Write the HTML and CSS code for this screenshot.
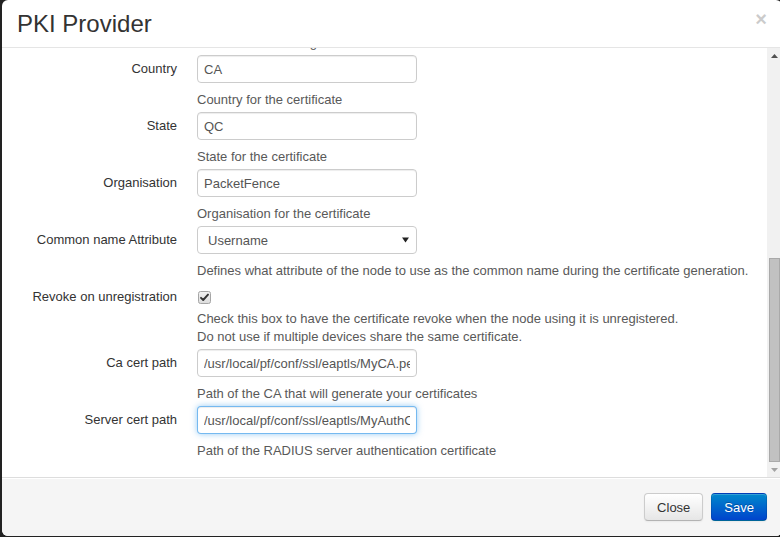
FILE: index.html
```html
<!DOCTYPE html>
<html>
<head>
<meta charset="utf-8">
<link rel="stylesheet" href="styles.css">
</head>
<body>
<div class="modal">
  <div class="modal-header">
    <h3 class="modal-title">PKI Provider</h3>
    <span class="close">×</span>
  </div>
  <div class="modal-body">
    <div class="scroll-area">
      <form class="form">
        <div class="group">
          <div class="label"></div>
          <div class="controls">
            <div class="help flush">Profile used for the generation of certificate</div>
          </div>
        </div>
        <div class="group">
          <label class="label">Country</label>
          <div class="controls">
            <input class="input" type="text" value="CA">
            <div class="help">Country for the certificate</div>
          </div>
        </div>
        <div class="group">
          <label class="label">State</label>
          <div class="controls">
            <input class="input" type="text" value="QC">
            <div class="help">State for the certificate</div>
          </div>
        </div>
        <div class="group">
          <label class="label">Organisation</label>
          <div class="controls">
            <input class="input" type="text" value="PacketFence">
            <div class="help">Organisation for the certificate</div>
          </div>
        </div>
        <div class="group">
          <label class="label">Common name Attribute</label>
          <div class="controls">
            <div class="select">
              <span>Username</span>
              <svg class="caret" width="7" height="6" viewBox="0 0 7 6"><path d="M0 0.5H7L3.5 5.5Z" fill="#222"/></svg>
            </div>
            <div class="help">Defines what attribute of the node to use as the common name during the certificate generation.</div>
          </div>
        </div>
        <div class="group">
          <label class="label">Revoke on unregistration</label>
          <div class="controls">
            <div class="check-row">
              <svg class="checkbox" width="13" height="13" viewBox="0 0 13 13">
                <defs>
                  <linearGradient id="cbg" x1="0" y1="0" x2="0" y2="1">
                    <stop offset="0" stop-color="#f2f2f2"/>
                    <stop offset="1" stop-color="#dcdcdc"/>
                  </linearGradient>
                </defs>
                <rect x="0.5" y="0.5" width="12" height="12" rx="2" fill="url(#cbg)" stroke="#a6a6a6"/>
                <path d="M3 6.8L5.2 9L10 3.6" fill="none" stroke="#333" stroke-width="1.9" stroke-linecap="round" stroke-linejoin="round"/>
              </svg>
            </div>
            <div class="help tight">Check this box to have the certificate revoke when the node using it is unregistered.<br>Do not use if multiple devices share the same certificate.</div>
          </div>
        </div>
        <div class="group">
          <label class="label">Ca cert path</label>
          <div class="controls">
            <input class="input" type="text" value="/usr/local/pf/conf/ssl/eaptls/MyCA.pem">
            <div class="help">Path of the CA that will generate your certificates</div>
          </div>
        </div>
        <div class="group">
          <label class="label">Server cert path</label>
          <div class="controls">
            <input class="input focus" type="text" value="/usr/local/pf/conf/ssl/eaptls/MyAuthCert.pem">
            <div class="help">Path of the RADIUS server authentication certificate</div>
          </div>
        </div>
      </form>
    </div>
    <div class="scrollbar">
      <div class="sb-btn">
        <svg width="7" height="4" viewBox="0 0 7 4"><path d="M0 4H7L3.5 0Z" fill="#505050"/></svg>
      </div>
      <div class="sb-track"><div class="sb-thumb"></div></div>
      <div class="sb-btn">
        <svg width="7" height="4" viewBox="0 0 7 4"><path d="M0 0H7L3.5 4Z" fill="#a3a3a3"/></svg>
      </div>
    </div>
  </div>
  <div class="modal-footer">
    <button class="btn" type="button">Close</button>
    <button class="btn btn-primary" type="button">Save</button>
  </div>
</div>
</body>
</html>
```

FILE: styles.css
```css
html, body {
  margin: 0;
  padding: 0;
  height: 537px;
  overflow: hidden;
  background: #222;
}
body {
  display: flex;
  padding-left: 2px;
  font-family: "Liberation Sans", Arial, sans-serif;
  font-size: 13px;
  color: #333;
}
.modal {
  flex: 0 0 780px;
  width: 780px;
  height: 536px;
  background: #fff;
  border-radius: 6px;
  display: flex;
  flex-direction: column;
  overflow: hidden;
}
.modal-header {
  display: flex;
  justify-content: space-between;
  align-items: flex-start;
  padding: 9px 15px 8px 15px;
  border-bottom: 1px solid #e5e5e5;
}
.modal-title {
  margin: 0;
  font-size: 24px;
  line-height: 30px;
  font-weight: normal;
  color: #333;
}
.close {
  font-size: 20px;
  font-weight: bold;
  line-height: 20px;
  color: #000;
  opacity: 0.2;
}
.modal-body {
  flex: 1;
  min-height: 0;
  display: flex;
}
.scroll-area {
  flex: 1;
  min-width: 0;
  overflow: hidden;
  display: flex;
  flex-direction: column;
  justify-content: flex-end;
}
.form {
  margin: 0;
  padding: 0 15px 14px 15px;
}
.group {
  display: flex;
  margin-bottom: 3px;
}
.label {
  flex: 0 0 160px;
  width: 160px;
  margin-right: 20px;
  text-align: right;
  line-height: 28px;
  color: #333;
}
.controls {
  flex: 1;
  min-width: 0;
}
.input {
  display: block;
  box-sizing: border-box;
  width: 220px;
  height: 28px;
  margin: 0;
  padding: 0 6px;
  border: 1px solid #ccc;
  border-radius: 4px;
  box-shadow: inset 0 1px 1px rgba(0, 0, 0, 0.075);
  font-family: "Liberation Sans", Arial, sans-serif;
  font-size: 13px;
  color: #555;
  background: #fff;
  outline: none;
}
.input.focus {
  border-color: rgba(82, 168, 236, 0.8);
  box-shadow: inset 0 1px 1px rgba(0, 0, 0, 0.075), 0 0 6px rgba(82, 168, 236, 0.6);
}
.select {
  box-sizing: border-box;
  width: 220px;
  height: 28px;
  display: flex;
  align-items: center;
  justify-content: space-between;
  padding: 0 7px 0 10px;
  border: 1px solid #ccc;
  border-radius: 4px;
  background: #fff;
  color: #555;
}
.caret {
  display: block;
}
.help {
  margin-top: 8px;
  line-height: 18px;
  color: #595959;
  white-space: nowrap;
}
.help.tight,
.help.flush {
  margin-top: 0;
}
.check-row {
  height: 27px;
  display: flex;
  align-items: center;
  padding-left: 1px;
}
.checkbox {
  display: block;
  margin-top: 1px;
}
.scrollbar {
  flex: 0 0 15px;
  width: 15px;
  background: #f1f1f1;
  display: flex;
  flex-direction: column;
}
.sb-btn {
  height: 15px;
  display: flex;
  align-items: center;
  justify-content: center;
}
.sb-track {
  flex: 1;
  display: flex;
  flex-direction: column;
  justify-content: flex-end;
}
.sb-thumb {
  height: 204px;
  margin: 0 2px;
  background: #c1c1c1;
  border: 1px solid #a9a9a9;
  box-sizing: border-box;
}
.modal-footer {
  display: flex;
  justify-content: flex-end;
  gap: 8px;
  padding: 15px;
  background: #f5f5f5;
  border-top: 1px solid #ddd;
  box-shadow: inset 0 1px 0 #fff;
}
.btn {
  height: 28px;
  padding: 0 12px;
  margin: 0;
  font-family: "Liberation Sans", Arial, sans-serif;
  font-size: 13px;
  color: #333;
  background: linear-gradient(to bottom, #ffffff, #e6e6e6);
  border: 1px solid #ccc;
  border-bottom-color: #b3b3b3;
  border-radius: 4px;
  box-shadow: inset 0 1px 0 rgba(255, 255, 255, 0.2), 0 1px 2px rgba(0, 0, 0, 0.05);
}
.btn-primary {
  color: #fff;
  background: linear-gradient(to bottom, #0088cc, #0044cc);
  border-color: rgba(0, 0, 0, 0.1) rgba(0, 0, 0, 0.1) rgba(0, 0, 0, 0.25);
  text-shadow: 0 -1px 0 rgba(0, 0, 0, 0.25);
}
```
